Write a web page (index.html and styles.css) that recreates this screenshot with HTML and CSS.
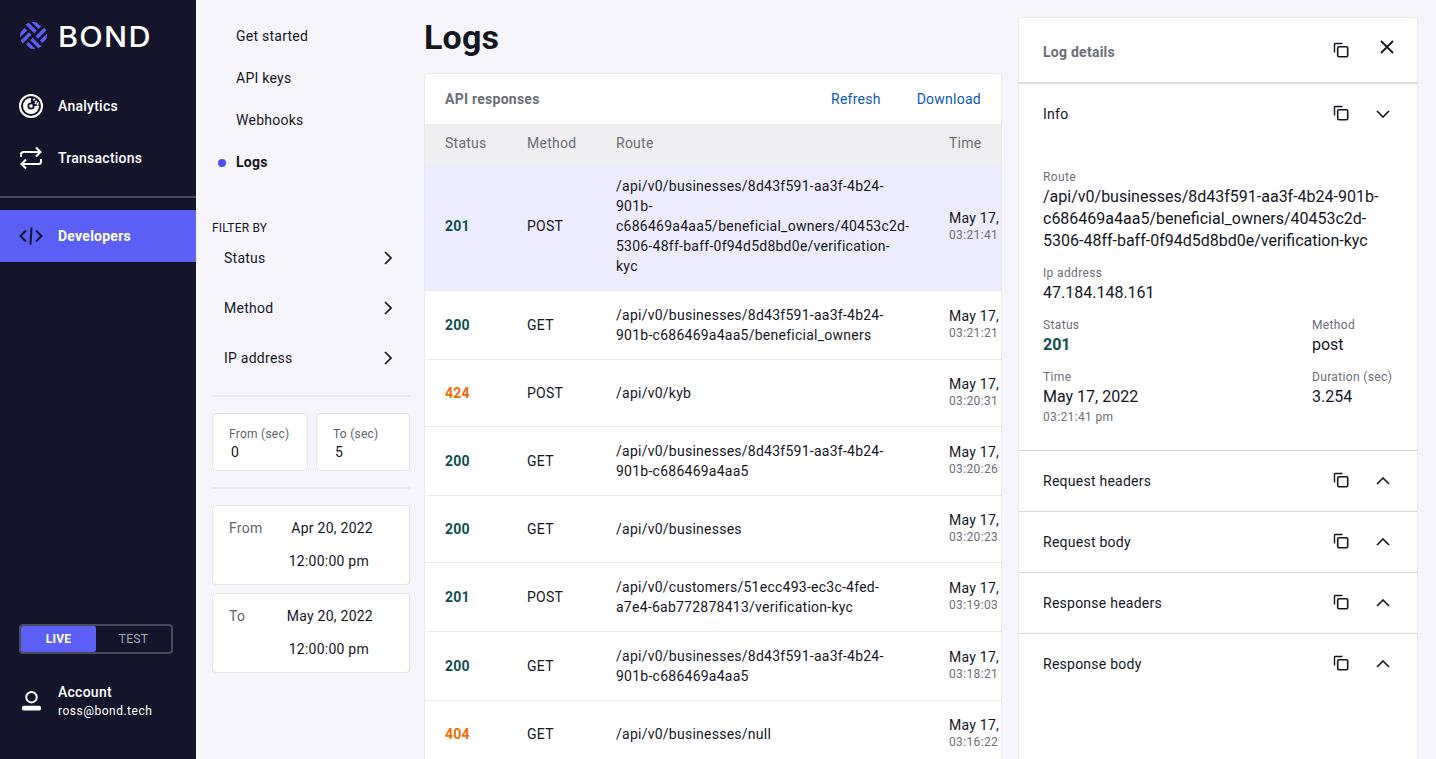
FILE: index.html
```html
<!DOCTYPE html>
<html lang="en">
<head>
	<meta charset="UTF-8">
	<meta name="viewport" content="width=device-width, initial-scale=1.0">
	<title>Logs</title>
	<link rel="stylesheet" href="styles.css">
</head>
<body>
	<svg width="0" height="0" class="defs">
		<symbol id="copy" viewBox="0 0 16 16">
			<path d="M1.500 10.500V2.200c0-.4.3-.7.7-.7h7.300" fill="none" stroke="currentColor" stroke-width="1.400"/>
			<rect x="4.700" y="4.700" width="10" height="10" rx="1.200" fill="none" stroke="currentColor" stroke-width="1.600"/>
		</symbol>
		<symbol id="up" viewBox="0 0 14 8"><path d="M1 7l6-6 6 6" fill="none" stroke="currentColor" stroke-width="1.600"/></symbol>
		<symbol id="down" viewBox="0 0 14 8"><path d="M1 1l6 6 6-6" fill="none" stroke="currentColor" stroke-width="1.600"/></symbol>
		<symbol id="right" viewBox="0 0 8 14"><path d="M1 1l6 6-6 6" fill="none" stroke="currentColor" stroke-width="1.700"/></symbol>
	</svg>

	<aside class="sidebar">
		<div class="logo">
			<svg class="logo-icon" viewBox="-14 -14 28 28">
				<defs><clipPath id="logo-clip"><circle r="14"/></clipPath></defs>
				<g clip-path="url(#logo-clip)">
					<g transform="rotate(45)" fill="#5b5ff5">
						<rect x="-15" y="-12" width="14" height="3.600"/>
						<rect x="-15" y="-5.800" width="14" height="3.600"/>
						<rect x="8.400" y="-15" width="3.600" height="14"/>
						<rect x="2" y="-15" width="3.600" height="14"/>
						<rect x="1" y="2.200" width="14" height="3.600"/>
						<rect x="1" y="8.400" width="14" height="3.600"/>
						<rect x="-5.600" y="1" width="3.600" height="14"/>
						<rect x="-12" y="1" width="3.600" height="14"/>
					</g>
				</g>
			</svg>
			<span class="logo-text">BOND</span>
		</div>
		<nav class="main-nav">
			<a class="nav-item">
				<svg class="nav-icon" viewBox="0 0 24 24">
					<circle cx="12" cy="12" r="11" fill="none" stroke="#fff" stroke-width="2"/>
					<path d="M12 4a8 8 0 1 0 8 8h-4.400a3.600 3.600 0 1 1-3.600-3.600z" fill="#fff"/>
					<circle cx="12" cy="12" r="1.800" fill="#fff"/>
					<path d="M14.500 5l5 5M16 8.500l3.500 3" stroke="#fff" stroke-width="2.200" stroke-dasharray="1.500 1.200"/>
				</svg>
				<span>Analytics</span>
			</a>
			<a class="nav-item">
				<svg class="nav-icon" viewBox="0 0 24 24" fill="none" stroke="#fff" stroke-width="2">
					<path d="M2 11V8.500C2 7 3 6 4.500 6H21M17 1.500L21.500 6 17 10.500"/>
					<path d="M22 13v2.500c0 1.500-1 2.500-2.500 2.500H3M7 13.500L2.500 18 7 22.500"/>
				</svg>
				<span>Transactions</span>
			</a>
		</nav>
		<div class="sidebar-line"></div>
		<a class="nav-item nav-active">
			<svg class="nav-icon" viewBox="0 0 24 24" fill="none" stroke="#14152a" stroke-width="2">
				<path d="M7 6.500L1.500 12 7 17.500M17 6.500L22.500 12 17 17.500M12.500 3.500l-1 17"/>
			</svg>
			<span>Developers</span>
		</a>
		<div class="sidebar-bottom">
			<div class="mode-switch">
				<span class="mode mode-on">LIVE</span>
				<span class="mode">TEST</span>
			</div>
			<div class="account">
				<svg class="account-icon" viewBox="0 0 22 22">
					<circle cx="11" cy="7" r="5.500" fill="none" stroke="#fff" stroke-width="2"/>
					<rect x="1" y="16" width="20" height="5" rx="2" fill="#fff"/>
				</svg>
				<div>
					<div class="account-name">Account</div>
					<div class="account-mail">ross@bond.tech</div>
				</div>
			</div>
		</div>
	</aside>

	<section class="subnav">
		<ul class="sub-links">
			<li>Get started</li>
			<li>API keys</li>
			<li>Webhooks</li>
			<li class="sub-active">Logs</li>
		</ul>
		<div class="filter-title">FILTER BY</div>
		<div class="filter-row"><span>Status</span><svg class="chev-right"><use href="#right"/></svg></div>
		<div class="filter-row"><span>Method</span><svg class="chev-right"><use href="#right"/></svg></div>
		<div class="filter-row"><span>IP address</span><svg class="chev-right"><use href="#right"/></svg></div>
		<hr class="sub-line sub-line-first">
		<div class="sec-fields">
			<div class="card sec-card"><label>From (sec)</label><div>0</div></div>
			<div class="card sec-card"><label>To (sec)</label><div>5</div></div>
		</div>
		<hr class="sub-line">
		<div class="card date-card">
			<span class="date-label">From</span>
			<div class="date-value"><div>Apr 20, 2022</div><div class="date-time">12:00:00 pm</div></div>
		</div>
		<div class="card date-card">
			<span class="date-label">To</span>
			<div class="date-value"><div>May 20, 2022</div><div class="date-time">12:00:00 pm</div></div>
		</div>
	</section>

	<main class="content">
		<h1>Logs</h1>
		<div class="logs-box">
			<div class="logs-head">
				<span class="box-title">API responses</span>
				<div class="logs-actions"><a>Refresh</a><a>Download</a></div>
			</div>
			<table class="logs-table">
				<colgroup><col class="col-status"><col class="col-method"><col class="col-route"><col class="col-time"></colgroup>
				<thead>
					<tr><th>Status</th><th>Method</th><th>Route</th><th>Time</th></tr>
				</thead>
				<tbody>
					<tr class="row-selected">
						<td class="ok">201</td><td>POST</td>
						<td>/api/v0/businesses/8d43f591-aa3f-4b24-<br>901b-<br>c686469a4aa5/beneficial_owners/40453c2d-<br>5306-48ff-baff-0f94d5d8bd0e/verification-<br>kyc</td>
						<td class="time"><div>May 17,</div><small>03:21:41</small></td>
					</tr>
					<tr>
						<td class="ok">200</td><td>GET</td>
						<td>/api/v0/businesses/8d43f591-aa3f-4b24-<br>901b-c686469a4aa5/beneficial_owners</td>
						<td class="time"><div>May 17,</div><small>03:21:21</small></td>
					</tr>
					<tr>
						<td class="bad">424</td><td>POST</td>
						<td>/api/v0/kyb</td>
						<td class="time"><div>May 17,</div><small>03:20:31</small></td>
					</tr>
					<tr>
						<td class="ok">200</td><td>GET</td>
						<td>/api/v0/businesses/8d43f591-aa3f-4b24-<br>901b-c686469a4aa5</td>
						<td class="time"><div>May 17,</div><small>03:20:26</small></td>
					</tr>
					<tr>
						<td class="ok">200</td><td>GET</td>
						<td>/api/v0/businesses</td>
						<td class="time"><div>May 17,</div><small>03:20:23</small></td>
					</tr>
					<tr>
						<td class="ok">201</td><td>POST</td>
						<td>/api/v0/customers/51ecc493-ec3c-4fed-<br>a7e4-6ab772878413/verification-kyc</td>
						<td class="time"><div>May 17,</div><small>03:19:03</small></td>
					</tr>
					<tr>
						<td class="ok">200</td><td>GET</td>
						<td>/api/v0/businesses/8d43f591-aa3f-4b24-<br>901b-c686469a4aa5</td>
						<td class="time"><div>May 17,</div><small>03:18:21</small></td>
					</tr>
					<tr>
						<td class="bad">404</td><td>GET</td>
						<td>/api/v0/businesses/null</td>
						<td class="time"><div>May 17,</div><small>03:16:22</small></td>
					</tr>
				</tbody>
			</table>
		</div>
	</main>

	<aside class="details">
		<div class="details-head">
			<span class="box-title">Log details</span>
			<svg class="icon-copy"><use href="#copy"/></svg>
			<svg class="icon-close" viewBox="0 0 14 14"><path d="M1 1l12 12M13 1L1 13" fill="none" stroke="currentColor" stroke-width="1.800"/></svg>
		</div>
		<div class="acc-row acc-info">
			<span>Info</span>
			<svg class="icon-copy"><use href="#copy"/></svg>
			<svg class="chev"><use href="#down"/></svg>
		</div>
		<div class="info-body">
			<div class="field">
				<label>Route</label>
				<div>/api/v0/businesses/8d43f591-aa3f-4b24-901b-<br>c686469a4aa5/beneficial_owners/40453c2d-<br>5306-48ff-baff-0f94d5d8bd0e/verification-kyc</div>
			</div>
			<div class="field">
				<label>Ip address</label>
				<div>47.184.148.161</div>
			</div>
			<div class="field field-pair">
				<div><label>Status</label><div class="ok">201</div></div>
				<div class="pair-right"><label>Method</label><div>post</div></div>
			</div>
			<div class="field field-pair">
				<div><label>Time</label><div>May 17, 2022</div><small>03:21:41 pm</small></div>
				<div class="pair-right"><label>Duration (sec)</label><div>3.254</div></div>
			</div>
		</div>
		<div class="acc-row"><span>Request headers</span><svg class="icon-copy"><use href="#copy"/></svg><svg class="chev"><use href="#up"/></svg></div>
		<div class="acc-row"><span>Request body</span><svg class="icon-copy"><use href="#copy"/></svg><svg class="chev"><use href="#up"/></svg></div>
		<div class="acc-row"><span>Response headers</span><svg class="icon-copy"><use href="#copy"/></svg><svg class="chev"><use href="#up"/></svg></div>
		<div class="acc-row acc-last"><span>Response body</span><svg class="icon-copy"><use href="#copy"/></svg><svg class="chev"><use href="#up"/></svg></div>
	</aside>
</body>
</html>
```

FILE: styles.css
```css
*{
	box-sizing: border-box;
}
html, body{
	height: 100%;
}
body{
	margin: 0;
	display: flex;
	height: 759px;
	overflow: hidden;
	background-color: #f5f5fb;
	color: #15161f;
	font-family: Roboto, "Liberation Sans", sans-serif;
	font-size: 14px;
	letter-spacing: 0.25px;
}
.defs{
	position: absolute;
}

/* left dark bar */
.sidebar{
	width: 196px;
	flex: none;
	display: flex;
	flex-direction: column;
	background-color: #14152a;
	color: #fff;
}
.logo{
	height: 80px;
	padding: 22px 0 0 20px;
	display: flex;
	align-items: flex-start;
	gap: 11px;
}
.logo-icon{
	width: 27px;
	height: 27px;
}
.logo-text{
	font-family: Inter, "Liberation Sans", sans-serif;
	font-size: 28px;
	line-height: 30px;
	font-weight: 500;
	letter-spacing: 1.2px;
	transform: scaleX(1.09);
	transform-origin: left center;
}
.nav-item{
	height: 52px;
	display: flex;
	align-items: center;
	gap: 15px;
	padding-left: 19px;
	font-weight: 500;
}
.nav-icon{
	width: 24px;
	height: 24px;
}
.sidebar-line{
	height: 2px;
	margin: 12px 0 12px;
	background-color: #4a4b5c;
}
.nav-active{
	background-color: #5b5ff5;
	box-shadow: 0 -1px #0b0b18, 0 1px #0b0b18;
	font-weight: 700;
}
.sidebar-bottom{
	margin-top: auto;
	padding: 0 0 0 19px;
}
.mode-switch{
	width: 154px;
	height: 30px;
	display: flex;
	border: 2px solid #4a4b5c;
	border-radius: 4px;
}
.mode{
	width: 75px;
	display: flex;
	align-items: center;
	justify-content: center;
	font-size: 12px;
	color: #a9aab4;
}
.mode-on{
	background-color: #5b5ff5;
	border-radius: 2px;
	color: #fff;
	font-weight: 700;
}
.account{
	display: flex;
	align-items: center;
	gap: 16px;
	margin: 28px 0 39px;
	padding-left: 2px;
}
.account-icon{
	width: 21px;
	height: 22px;
}
.account-name{
	line-height: 20px;
	font-weight: 500;
}
.account-mail{
	font-size: 12px;
	line-height: 18px;
	letter-spacing: 0.5px;
}

/* sub menu */
.subnav{
	width: 228px;
	flex: none;
	padding: 15px 14px 0 16px;
}
.sub-links{
	list-style: none;
	margin: 0;
	padding: 0 0 0 24px;
}
.sub-links li{
	height: 42px;
	line-height: 42px;
	position: relative;
}
.sub-active{
	font-weight: 700;
}
.sub-active::before{
	content: "";
	position: absolute;
	left: -18px;
	top: 18px;
	width: 8px;
	height: 8px;
	border-radius: 50%;
	background-color: #4a4ff0;
}
.filter-title{
	margin: 37px 0 -3px;
	font-size: 12px;
	line-height: 16px;
	letter-spacing: 0.2px;
}
.filter-row{
	height: 50px;
	display: flex;
	align-items: center;
	justify-content: space-between;
	padding: 0 18px 0 12px;
}
.chev-right{
	width: 8px;
	height: 14px;
}
.sub-line{
	margin: 0;
	border: 0;
	height: 2px;
	background-color: #e9e9ee;
}
.sub-line-first{
	margin-top: 12px;
}
.card{
	background-color: #fff;
	border: 1px solid #e3e3e8;
	border-radius: 4px;
}
.sec-fields{
	display: flex;
	gap: 8px;
	margin: 16px 0;
}
.sec-card{
	flex: 1;
	height: 58px;
	padding: 11px 12px 0 16px;
	line-height: 18px;
}
.sec-card:first-child{
	flex: none;
	width: 96px;
}
.sec-card label{
	display: block;
	font-size: 12px;
	color: #61626b;
}
.sec-card div{
	padding-left: 2px;
}
.date-card{
	height: 80px;
	margin: 16px 0 8px;
	padding: 6px 0 0 16px;
	display: flex;
	justify-content: space-between;
}
.date-card + .date-card{
	margin-top: 8px;
}
.date-label{
	line-height: 33px;
	color: #61626b;
}
.date-value{
	margin-right: 36px;
	line-height: 33px;
	text-align: right;
}
.date-time{
	padding-right: 4px;
}

/* logs table */
.content{
	width: 578px;
	flex: none;
	overflow: hidden;
}
h1{
	margin: 0;
	height: 73px;
	padding-top: 17px;
	font-size: 34px;
	line-height: 40px;
	font-weight: 700;
	letter-spacing: 0.2px;
}
.logs-box{
	background-color: #fff;
	border: 1px solid #e9e9ee;
	border-radius: 4px 4px 0 0;
	border-bottom: 0;
	overflow: hidden;
}
.logs-head{
	height: 50px;
	display: flex;
	align-items: center;
	justify-content: space-between;
	padding: 0 20px;
}
.box-title{
	font-weight: 700;
	color: #6c6d76;
}
.logs-actions{
	display: flex;
	gap: 36px;
}
.logs-actions a{
	color: #0b57c2;
}
.logs-table{
	table-layout: fixed;
	width: 576px;
	border-collapse: separate;
	border-spacing: 0;
}
.col-status{ width: 102px; }
.col-method{ width: 89px; }
.col-route{ width: 333px; }
.col-time{ width: 52px; }
.logs-table th{
	height: 40px;
	padding: 0 0 2px;
	background-color: #efeff2;
	color: #6c6d76;
	font-weight: 400;
	text-align: left;
}
.logs-table td{
	height: 67px;
	padding: 14px 0;
	border-bottom: 1px solid #e9e9ee;
	line-height: 20px;
	vertical-align: middle;
	white-space: nowrap;
}
.logs-table .row-selected td{
	padding: 12px 0 14px;
	background-color: #ececfc;
}
.logs-table .time, .logs-table .row-selected .time{
	padding: 0 0 2px;
	line-height: 18px;
}
.logs-table th:first-child, .logs-table td:first-child, .logs-table .row-selected td:first-child{
	padding-left: 20px;
}
small{
	display: block;
	font-size: 12px;
	line-height: 16px;
	letter-spacing: 0.35px;
	color: #6c6d76;
}
.ok{
	color: #0c4f4f;
	font-weight: 700;
}
.bad{
	color: #ef6c00;
	font-weight: 700;
}

/* right panel */
.details{
	width: 400px;
	flex: none;
	margin: 17px 0 0 16px;
	background-color: #fff;
	border: 1px solid #e9e9ee;
	border-bottom: 0;
	border-radius: 4px 4px 0 0;
}
.details-head{
	height: 66px;
	display: flex;
	align-items: center;
	padding: 4px 23px 0 24px;
	border-bottom: 2px solid #dedee2;
}
.details-head .box-title{
	flex: 1;
}
.icon-copy{
	width: 16px;
	height: 16px;
	margin-top: -2px;
}
.details-head .icon-copy{
	margin-top: -5px;
}
.icon-close{
	width: 14px;
	height: 14px;
	margin: -10px 0 0 31px;
	color: #15161f;
}
.acc-row{
	height: 61px;
	display: flex;
	align-items: center;
	padding: 0 27px 0 24px;
	border-bottom: 1px solid #d9d9de;
}
.acc-row span{
	flex: 1;
}
.acc-info{
	padding-bottom: 2px;
	border-bottom: 0;
}
.acc-last{
	border-bottom-color: transparent;
}
.chev{
	width: 14px;
	height: 8px;
	margin-left: 27px;
}
.info-body{
	padding: 24px 24px 25px;
	border-bottom: 1px solid #d9d9de;
}
.info-body label{
	display: block;
	margin-bottom: 1px;
	font-size: 12px;
	line-height: 16px;
	letter-spacing: 0.35px;
	color: #6c6d76;
}
.field{
	margin-bottom: 13px;
	font-size: 16px;
	line-height: 22px;
	letter-spacing: 0;
}
.field:last-child{
	margin-bottom: 0;
}
.field-pair{
	display: flex;
	justify-content: space-between;
}
.pair-right{
	width: 81px;
}
.field small{
	margin-top: 1px;
}
```
